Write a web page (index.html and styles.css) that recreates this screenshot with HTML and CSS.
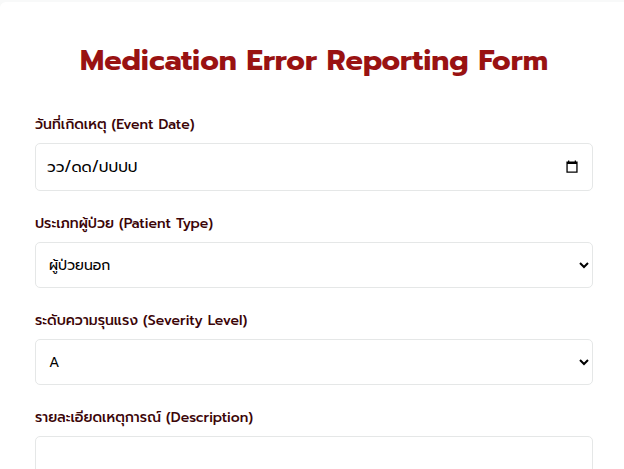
FILE: index.html
```html
<!DOCTYPE html>
<html lang="th">
<head>
  <meta charset="utf-8">
  <meta name="viewport" content="width=device-width, initial-scale=1">
  <title>Medication Error Reporting Form</title>
  <link rel="stylesheet" href="styles.css">
</head>
<body>
  <main class="card">
    <h1 class="title">Medication Error Reporting Form</h1>
    <form class="form">
      <div class="field">
        <label class="label" for="event-date">วันที่เกิดเหตุ (Event Date)</label>
        <div class="control date">
          <input class="date-input" id="event-date" type="text" placeholder="วว/ดด/ปปปป">
          <button class="date-button" type="button" aria-label="เลือกวันที่">
            <svg viewBox="0 0 12 14" width="12" height="14" aria-hidden="true">
              <path d="M2 .4h1.3V1.5h5.4V.4H10V1.5h1.6v11.2H.4V1.5H2zM1.7 4v7.5h8.6V4z" fill="#000" fill-rule="evenodd"/>
            </svg>
          </button>
        </div>
      </div>
      <div class="field">
        <label class="label" for="patient-type">ประเภทผู้ป่วย (Patient Type)</label>
        <select class="control select" id="patient-type">
          <option>ผู้ป่วยนอก</option>
        </select>
      </div>
      <div class="field">
        <label class="label" for="severity">ระดับความรุนแรง (Severity Level)</label>
        <select class="control select" id="severity">
          <option>A</option>
        </select>
      </div>
      <div class="field">
        <label class="label" for="description">รายละเอียดเหตุการณ์ (Description)</label>
        <textarea class="control textarea" id="description"></textarea>
      </div>
    </form>
  </main>
</body>
</html>
```
FILE: styles.css
```css
* {
  box-sizing: border-box;
}

html {
  overflow-x: hidden;
  scrollbar-width: none;
}

body {
  margin: 0;
  padding-top: 2px;
  background: #f8f9f9;
  color: #000;
  font-family: Prompt, Inter, "Noto Sans", "Noto Sans Thai", sans-serif;
  font-size: 14px;
}

.card {
  padding: 40px 31px 40px 35px;
  border-top-left-radius: 6px;
  background: #fff;
}

.title {
  margin: 0 0 36px;
  color: #991212;
  font-size: 29px;
  font-weight: 700;
  line-height: 36px;
  text-align: center;
}

.form {
  display: grid;
  gap: 22px;
}

.field {
  display: grid;
  gap: 8px;
}

.label {
  color: #3b0508;
  font-weight: 500;
  line-height: 21px;
}

.control {
  width: 100%;
  height: 46px;
  border: 1px solid #e5e7e7;
  border-radius: 5px;
  background: #fff;
  color: #000;
  font: inherit;
}

.date {
  display: flex;
  align-items: center;
  height: 48px;
  padding: 0 14px 0 11px;
  font-size: 15px;
}

.date-input {
  flex: 1;
  min-width: 0;
  padding: 0;
  border: 0;
  outline: 0;
  background: none;
  font: inherit;
}

.date-input::placeholder {
  color: #000;
  opacity: 1;
}

.date-button {
  display: flex;
  padding: 0;
  border: 0;
  background: none;
}

.select {
  padding: 0 0 0 9px;
}

.textarea {
  display: block;
  height: 120px;
  padding: 12px;
  resize: vertical;
}
```
